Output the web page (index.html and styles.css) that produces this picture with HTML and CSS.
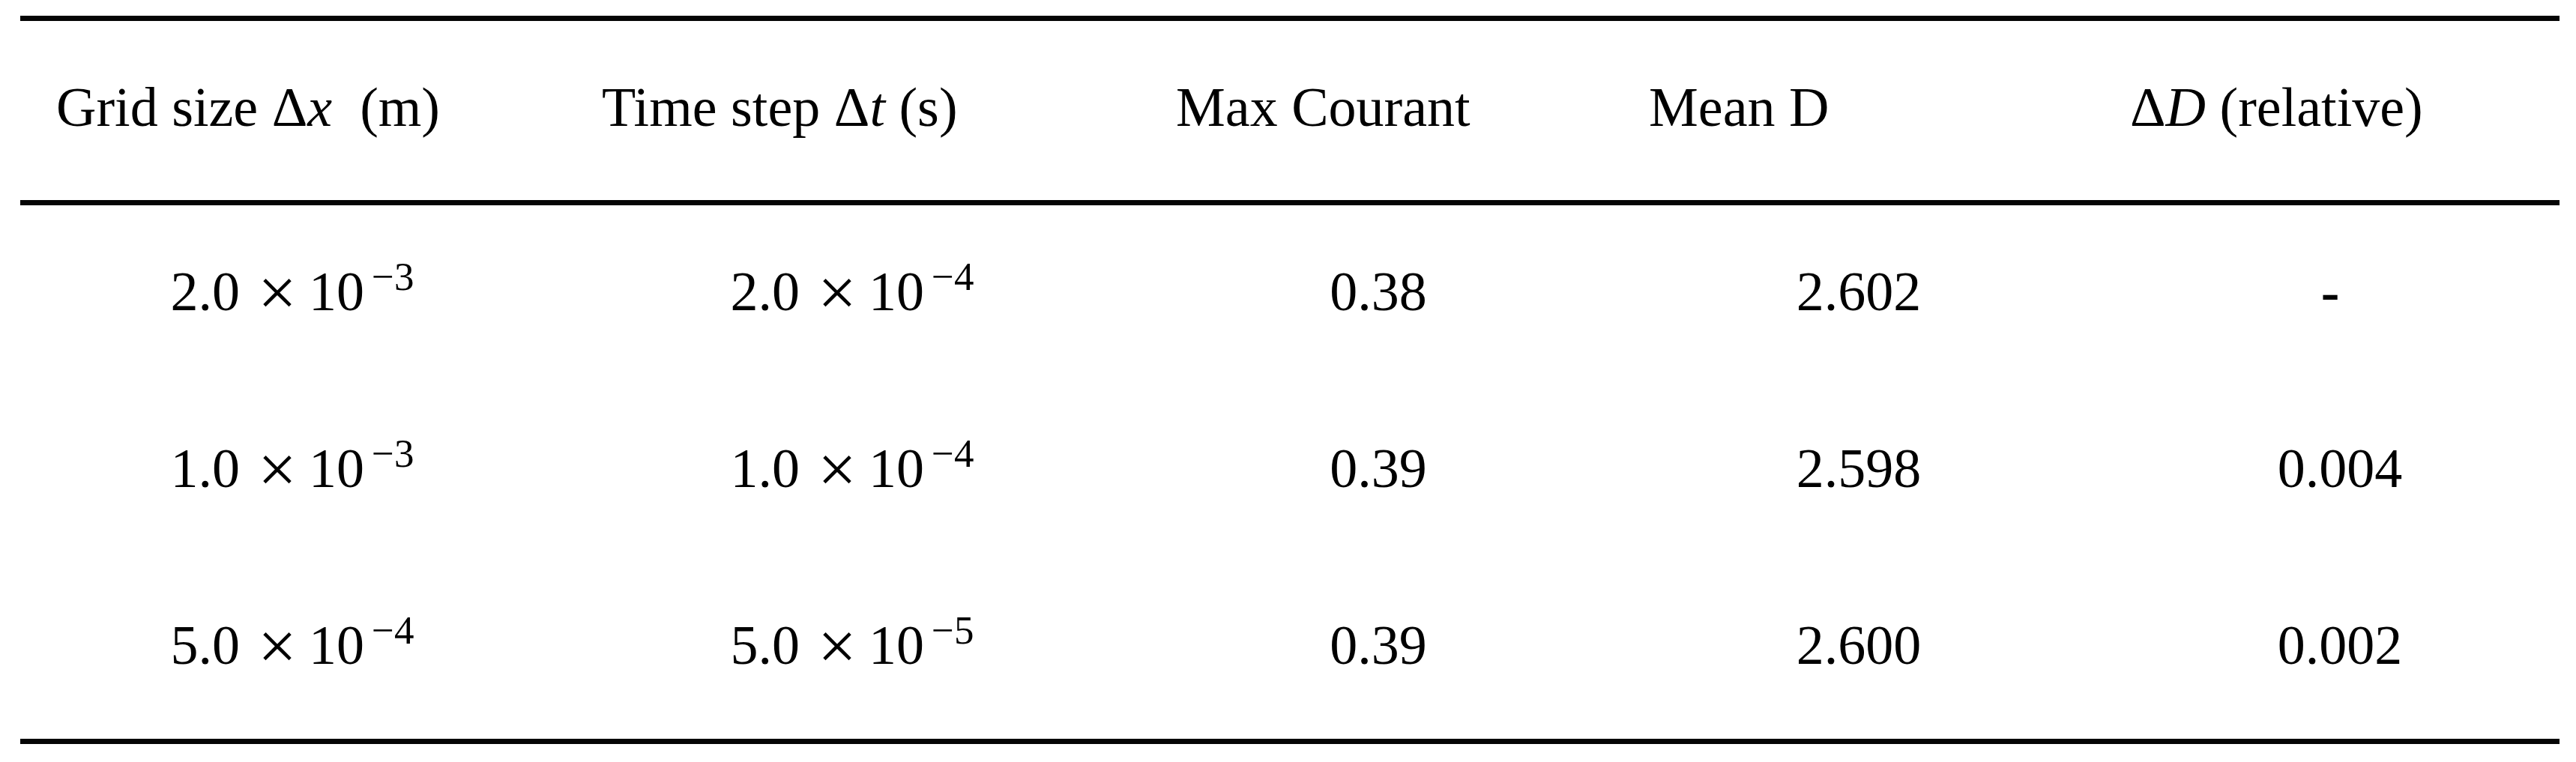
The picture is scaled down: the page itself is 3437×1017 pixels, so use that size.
FILE: index.html
```html
<!DOCTYPE html>
<html lang="en">
<head>
<meta charset="utf-8">
<title>Grid convergence table</title>
<link rel="stylesheet" href="styles.css">
</head>
<body>
<div class="tbl">
  <div class="row head">
    <div class="h">Grid size <span class="m">Δ<i>x</i></span>&nbsp; (m)</div>
    <div class="h h2">Time step <span class="m">Δ<i>t</i></span> (s)</div>
    <div class="h">Max Courant</div>
    <div class="h h4">Mean D</div>
    <div class="h h5"><span class="m">Δ<i>D</i></span> (relative)</div>
  </div>
  <div class="body">
    <div class="row">
      <div class="v"><span class="num">2.0<span class="op">×</span>10<span class="sup">−3</span></span></div>
      <div class="v"><span class="num">2.0<span class="op">×</span>10<span class="sup">−4</span></span></div>
      <div class="v">0.38</div>
      <div class="v">2.602</div>
      <div class="v nil">-</div>
    </div>
    <div class="row">
      <div class="v"><span class="num">1.0<span class="op">×</span>10<span class="sup">−3</span></span></div>
      <div class="v"><span class="num">1.0<span class="op">×</span>10<span class="sup">−4</span></span></div>
      <div class="v">0.39</div>
      <div class="v">2.598</div>
      <div class="v last">0.004</div>
    </div>
    <div class="row">
      <div class="v"><span class="num">5.0<span class="op">×</span>10<span class="sup">−4</span></span></div>
      <div class="v"><span class="num">5.0<span class="op">×</span>10<span class="sup">−5</span></span></div>
      <div class="v">0.39</div>
      <div class="v">2.600</div>
      <div class="v last">0.002</div>
    </div>
  </div>
</div>
</body>
</html>
```

FILE: styles.css
```css
html, body {
  margin: 0;
  padding: 0;
  background: #ffffff;
}

body {
  font-family: "Liberation Serif", "Times New Roman", serif;
  font-size: 74px;
  color: #000000;
}

.tbl {
  width: 3388px;
  margin: 21px 0 0 27px;
  border-top: 7px solid #050505;
  border-bottom: 7px solid #050505;
}

.row {
  display: grid;
  grid-template-columns: 726px 768px 636px 646px 612px;
  height: 74px;
  line-height: 74px;
  white-space: nowrap;
}

.head {
  padding: 78px 0 87px;
  border-bottom: 7px solid #050505;
}

.h {
  padding-left: 48px;
}

.h2 {
  padding-left: 50px;
}

.h4 {
  padding-left: 43px;
}

.h5 {
  padding-left: 39px;
}

.m i {
  font-style: italic;
}

.body {
  display: flex;
  flex-direction: column;
  gap: 162px;
  padding: 78px 0 88px;
}

.v {
  text-align: center;
}

.v.last {
  padding-left: 26px;
}

.v.nil {
  font-weight: bold;
}

.op {
  font-size: 92px;
  line-height: 0;
  vertical-align: -7px;
  margin: 0 16px 0 24px;
}

.sup {
  font-size: 53px;
  line-height: 0;
  vertical-align: 27px;
  margin-left: 10px;
}
```
